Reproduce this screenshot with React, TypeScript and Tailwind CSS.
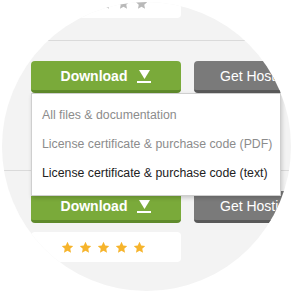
import React from 'react';

const Star: React.FC<{ className: string; size?: number }> = ({ className, size = 13 }) => (
  <svg width={size} height={size} viewBox="0 0 24 24" className={className}>
    <polygon
      fill="currentColor"
      points="12,1.5 15.2,8.3 22.6,9.2 17.1,14.3 18.5,21.7 12,18.1 5.5,21.7 6.9,14.3 1.4,9.2 8.8,8.3"
    />
  </svg>
);

const Stars: React.FC<{ color: string }> = ({ color }) => (
  <div className="flex w-full items-center justify-center gap-[5px] pr-[5px]">
    {[0, 1, 2, 3, 4].map((i) => (
      <Star key={i} className={color} />
    ))}
  </div>
);

const DownloadIcon = () => (
  <span className="flex flex-col items-center">
    <svg width="11" height="9" viewBox="0 0 11 9" className="text-white">
      <polygon points="0,0 11,0 5.5,9" fill="currentColor" />
    </svg>
    <span className="mt-[2px] h-[2px] w-[14px] bg-white" />
  </span>
);

const ButtonRow: React.FC<{ menu?: boolean }> = ({ menu }) => (
  <div className="flex gap-[13px]">
    <div className="relative w-[150px] shrink-0">
      <button className="flex h-[32px] w-full items-center justify-center gap-[10px] rounded-[4px] border-b-[3px] border-[#5f8a2b] bg-[#7aaa3a] pt-[2px] text-[14px] font-bold text-white">
        <span>Download</span>
        <DownloadIcon />
      </button>
      {menu && (
        <div className="absolute left-0 top-full z-10 w-[250px] border border-[#cfcfcf] bg-white pb-[7px] pt-[7px] shadow-[1px_2px_4px_rgba(0,0,0,0.18)]">
          <div className="flex h-[29px] items-center whitespace-nowrap px-[10px] text-[12.3px] text-[#8c8c8c]">All files &amp; documentation</div>
          <div className="flex h-[29px] items-center whitespace-nowrap px-[10px] text-[12.3px] text-[#8c8c8c]">License certificate &amp; purchase code (PDF)</div>
          <div className="flex h-[29px] items-center whitespace-nowrap px-[10px] text-[12.3px] text-[#222222]">License certificate &amp; purchase code (text)</div>
        </div>
      )}
    </div>
    <button className="flex h-[32px] w-[150px] shrink-0 items-center whitespace-nowrap rounded-[4px] border-b-[3px] border-[#595959] bg-[#7a7a7a] pl-[26px] pt-[2px] text-[14px] text-white">
      Get Hosting
    </button>
  </div>
);

export default function App() {
  return (
    <div className="h-[293px] w-[293px] bg-white p-[2px] font-['Liberation_Sans',Arial,sans-serif]">
      <div className="h-[289px] w-[289px] overflow-hidden rounded-full bg-[#f3f3f3]">
        <div className="-mt-[14px] flex flex-col">
          <div className="ml-[29px] flex h-[30px] w-[150px] items-center rounded-[4px] bg-white pl-[4px]">
            <Stars color="text-[#b9b9b9]" />
          </div>
          <div className="mt-[22px] border-t border-[#dadada]" />
          <div className="ml-[29px] mt-[20px] flex flex-col">
            <ButtonRow menu />
            <div className="mt-[9px] flex h-[30px] w-[150px] items-center rounded-[4px] bg-white">
              <Stars color="text-[#f6b42c]" />
            </div>
          </div>
          <div className="mt-[38px] border-t border-[#dadada]" />
          <div className="ml-[29px] mt-[20px] flex flex-col">
            <ButtonRow />
            <div className="mt-[9px] flex h-[30px] w-[150px] items-center rounded-[4px] bg-white">
              <Stars color="text-[#f6b42c]" />
            </div>
          </div>
        </div>
      </div>
    </div>
  );
}
